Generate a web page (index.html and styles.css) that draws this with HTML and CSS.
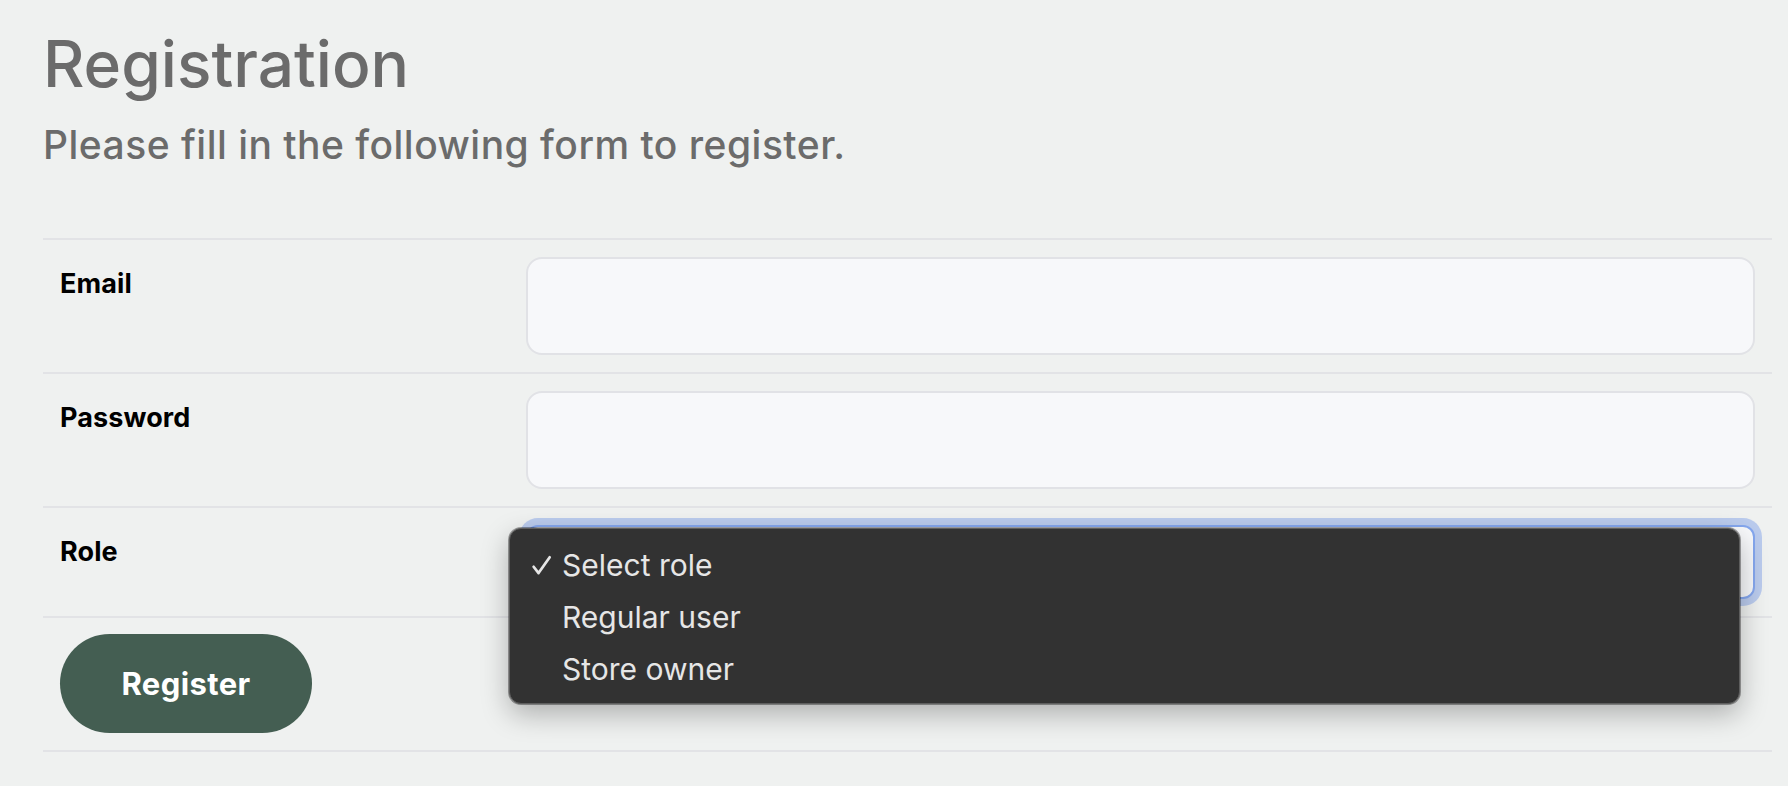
FILE: index.html
```html
<!DOCTYPE html>
<html lang="en">
<head>
<meta charset="utf-8">
<title>Registration</title>
<link rel="stylesheet" href="styles.css">
</head>
<body>
<main class="page">
  <h1 class="title">Registration</h1>
  <p class="subtitle">Please fill in the following form to register.</p>
  <form class="form">
    <div class="row">
      <label class="label" for="email">Email</label>
      <div class="field"><input class="input" id="email" type="email"></div>
    </div>
    <div class="row">
      <label class="label" for="password">Password</label>
      <div class="field"><input class="input" id="password" type="password"></div>
    </div>
    <div class="row">
      <label class="label" for="role">Role</label>
      <div class="field">
        <select class="select" id="role">
          <option>Select role</option>
          <option>Regular user</option>
          <option>Store owner</option>
        </select>
        <ul class="menu">
          <li class="menu-item"><span class="check"><svg viewBox="0 0 20 20" width="21" height="21"><path d="M2.5 11.2 L7.2 17.2 L17.8 2.2" fill="none" stroke="#e6e6e6" stroke-width="2.6" stroke-linecap="round" stroke-linejoin="round"/></svg></span>Select role</li>
          <li class="menu-item"><span class="check"></span>Regular user</li>
          <li class="menu-item"><span class="check"></span>Store owner</li>
        </ul>
      </div>
    </div>
    <div class="row row-actions">
      <button class="button" type="button">Register</button>
    </div>
  </form>
</main>
</body>
</html>
```

FILE: styles.css
```css
* { box-sizing: border-box; }

html, body {
  margin: 0;
  background: #eff1f0;
  font-family: "Inter", "Noto Sans", sans-serif;
}

.page {
  padding: 0 16px 0 43px;
}

.title {
  margin: 25px 0 0;
  font-size: 64px;
  line-height: 77px;
  font-weight: 500;
  color: #6b6b6b;
}

.subtitle {
  margin: 20px 0 0;
  font-size: 39px;
  line-height: 46px;
  font-weight: 500;
  color: #6b6b6b;
  letter-spacing: 0.48px;
}

.form {
  margin-top: 70px;
  border-bottom: 2px solid #e2e3e6;
}

.row {
  display: grid;
  grid-template-columns: 466px 1fr;
  border-top: 2px solid #e2e3e6;
}

.label {
  padding: 24px 17px 0;
  font-size: 27px;
  line-height: 40px;
  font-weight: 700;
  color: #000;
  letter-spacing: 0.1px;
}

.field {
  position: relative;
  padding: 17px;
}

.input {
  display: block;
  width: 100%;
  height: 98px;
  border: 2px solid #e1e2e6;
  border-radius: 16px;
  background: #f7f8fa;
  font: inherit;
  outline: none;
}

.select {
  display: block;
  width: 100%;
  height: 74px;
  -webkit-appearance: none;
  appearance: none;
  border: 2px solid #85a7ee;
  border-radius: 12px;
  background: #f8f9fb;
  box-shadow: 0 0 0 7px #bacbed;
  font: inherit;
  color: transparent;
  outline: none;
}

.menu {
  position: absolute;
  top: 20px;
  left: 0;
  right: 32px;
  margin: 0;
  padding: 10px 0 8px;
  list-style: none;
  background: #323232;
  border: 1.5px solid #5e5e5e;
  border-radius: 12px;
  box-shadow: 0 0 0 1px rgba(0, 0, 0, 0.35), 0 10px 28px rgba(0, 0, 0, 0.28);
}

.menu-item {
  display: flex;
  align-items: center;
  height: 52px;
  padding-left: 21px;
  font-size: 30px;
  font-weight: 400;
  color: #e6e6e6;
}

.check {
  display: inline-flex;
  width: 31px;
  height: 21px;
  align-items: center;
}

.check svg { display: block; }

.row-actions {
  display: flex;
  padding: 16px 17px 17px;
}

.button {
  height: 99px;
  width: 252px;
  border: none;
  border-radius: 50px;
  background: #445e52;
  color: #fff;
  font-family: inherit;
  font-size: 31px;
  font-weight: 700;
  letter-spacing: 0.4px;
  cursor: pointer;
}
```
